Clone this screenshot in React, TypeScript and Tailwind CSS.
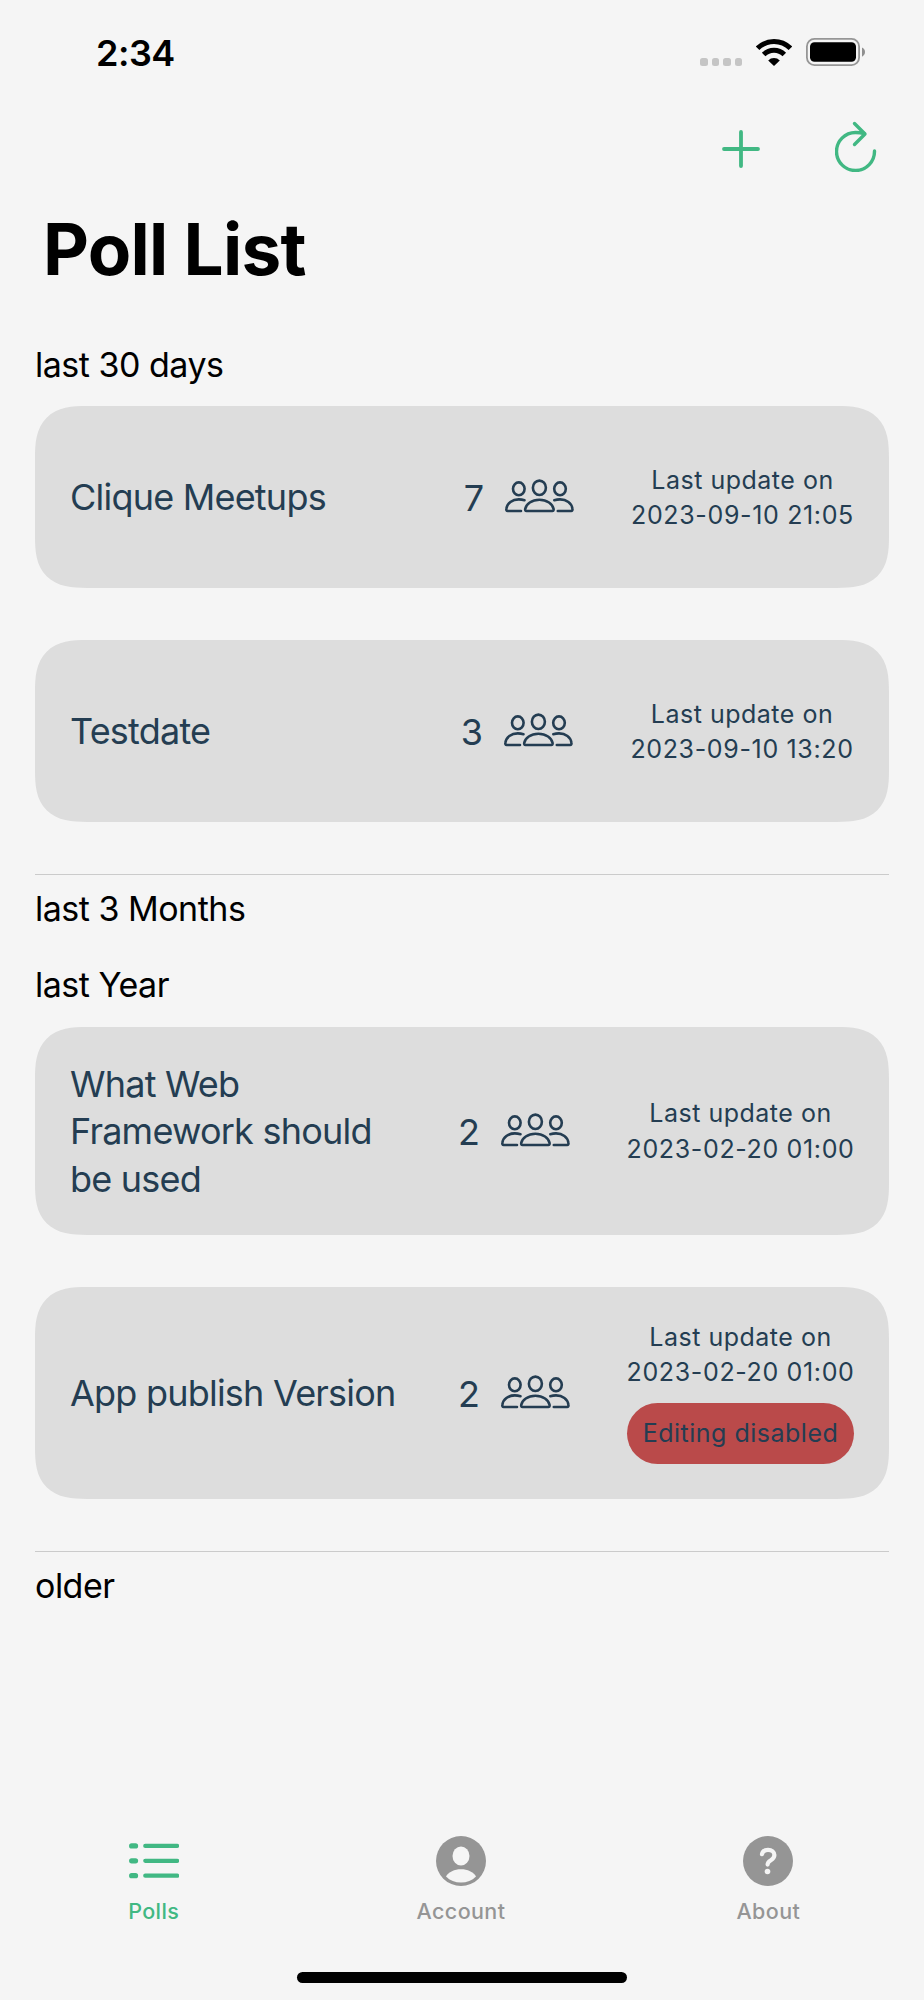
import type { ReactNode } from 'react'

type Poll = {
  title: string
  participants: number
  updated: string
  locked?: boolean
  size: string
  meta: string
}

const recent: Poll[] = [
  { title: 'Clique Meetups', participants: 7, updated: '2023-09-10 21:05', size: 'h-[182px]', meta: 'w-[223px] pt-0.5' },
  { title: 'Testdate', participants: 3, updated: '2023-09-10 13:20', size: 'h-[182px]', meta: 'w-[224px] pt-0.5' },
]

const lastYear: Poll[] = [
  { title: 'What Web Framework should be used', participants: 2, updated: '2023-02-20 01:00', size: 'h-[208px]', meta: 'w-[227px] pt-px' },
  { title: 'App publish Version', participants: 2, updated: '2023-02-20 01:00', locked: true, size: 'h-[212px]', meta: 'w-[227px] pb-0.5' },
]

function StatusBar() {
  return (
    <div className="flex h-[104px] items-center justify-between pl-24 pr-[59px]">
      <span className="pt-0.5 text-[36px] leading-[44px] font-semibold tracking-[-0.5px]">2:34</span>
      <div className="flex items-center">
        <div className="mt-5 mr-3.5 flex gap-1">
          {[...Array(4)].map((_, i) => (
            <span key={i} className="h-2 w-[7.5px] rounded-[2.5px] bg-[#c5c5c5]" />
          ))}
        </div>
        <svg width="36" height="27" viewBox="0 0 36 27" className="mr-3.5" fill="none" stroke="#000">
          <path d="M1.6 9.3a23.2 23.2 0 0 1 32.8 0" strokeWidth="5" />
          <path d="M7.7 15.6a14.6 14.6 0 0 1 20.6 0" strokeWidth="5" />
          <path d="M12.2 21.4a8.2 8.2 0 0 1 11.6 0L18 27z" fill="#000" stroke="none" />
        </svg>
        <svg width="59" height="28" viewBox="0 0 59 28">
          <rect x="0.9" y="0.9" width="52.2" height="26.2" rx="7.6" fill="none" stroke="#969696" strokeWidth="1.8" />
          <rect x="4" y="4.3" width="46" height="19.5" rx="4.5" />
          <path d="M56 9.5c1.8.8 3 2.5 3 4.6s-1.2 3.8-3 4.6z" fill="#8f8f8f" />
        </svg>
      </div>
    </div>
  )
}

function PeopleIcon() {
  return (
    <svg width="69" height="34" viewBox="0 0 69 34" className="-mt-0.5" fill="none" stroke="currentColor" strokeWidth="2.6" strokeLinecap="round" strokeLinejoin="round">
      <ellipse cx="34.4" cy="8.8" rx="6.5" ry="7.2" />
      <ellipse cx="13.8" cy="9.8" rx="5.8" ry="6.4" />
      <ellipse cx="55" cy="9.8" rx="5.8" ry="6.4" />
      <path d="M21.5 32c-1 0-1.5-.8-1.3-1.9 1-5.1 6.5-9.3 14.2-9.3s13.2 4.2 14.2 9.3c.2 1.1-.3 1.9-1.3 1.9z" />
      <path d="M19.5 21.2c-1.7-.5-3.6-.8-5.7-.8-6.7 0-11.6 3.900-12.400 9.100-.3 1.500.2 2.500 1.300 2.500h13.300" />
      <path d="M49.3 21.2c1.7-.5 3.600-.8 5.700-.8 6.700 0 11.600 3.900 12.400 9.100.3 1.500-.2 2.500-1.300 2.500H52.800" />
    </svg>
  )
}

function PollCard({ poll }: { poll: Poll }) {
  return (
    <div className={`flex items-center rounded-[52px] bg-[#ddd] px-[35px] text-[#243d52] [corner-shape:superellipse(1.45)] ${poll.size}`}>
      <div className="w-[335px] pt-0.5 text-[36px] leading-[47.5px] tracking-[-0.78px]">{poll.title}</div>
      <div className="ml-auto flex items-center gap-[21px]">
        <span className="pt-0.5 text-[36px] leading-[47px]">{poll.participants}</span>
        <PeopleIcon />
      </div>
      <div className={`ml-[57px] flex flex-col items-center text-[25px] leading-[35.3px] tracking-[0.5px] whitespace-nowrap ${poll.meta}`}>
        <span>Last update on</span>
        <span className="tracking-[0.65px]">{poll.updated}</span>
        {poll.locked && (
          <span className="mt-[13px] flex h-[61px] w-full items-center justify-center rounded-full bg-[#ba4a4a]">Editing disabled</span>
        )}
      </div>
    </div>
  )
}

function Heading({ children }: { children: ReactNode }) {
  return <h2 className="text-[34px] leading-10 tracking-[-0.5px]">{children}</h2>
}

function Tab({ label, active, children }: { label: string; active?: boolean; children: ReactNode }) {
  return (
    <button className={`flex flex-1 flex-col items-center ${active ? 'text-[#41b883]' : 'text-[#959595]'}`}>
      {children}
      <span className="mt-[11px] text-[21.5px] leading-7 font-medium tracking-[0.4px]">{label}</span>
    </button>
  )
}

export default function App() {
  return (
    <div className="flex h-[2000px] w-[924px] flex-col bg-[#f5f5f5] font-['Inter',sans-serif] text-black">
      <StatusBar />
      <div className="flex h-[91px] justify-end pt-[17px] pr-[47px] text-[#41b883]">
        <svg width="38" height="38" viewBox="0 0 38 38" className="mt-[9px] mr-[75px]" fill="none" stroke="currentColor" strokeWidth="3.8" strokeLinecap="round">
          <path d="M19 2v34M2 19h34" />
        </svg>
        <svg width="42" height="51" viewBox="0 0 42 51" fill="none" stroke="currentColor" strokeWidth="3.4" strokeLinecap="round" strokeLinejoin="round">
          <path d="M39.5 30A19 19 0 1 1 20.5 11.5c3 0 6 .3 8.5 1" />
          <path d="M19.5 2.5L30 13 19.5 23.5" />
        </svg>
      </div>
      <h1 className="ml-[43px] text-[71px] leading-[108px] font-bold tracking-[-0.75px]">Poll List</h1>

      <main className="flex flex-1 flex-col px-[35px] pt-[42px]">
        <Heading>last 30 days</Heading>
        <div className="mt-[21px] flex flex-col gap-[52px]">
          {recent.map((poll) => (
            <PollCard key={poll.title} poll={poll} />
          ))}
        </div>
        <hr className="mt-[52px] mb-3.5 border-[#cbcbcb]" />
        <Heading>last 3 Months</Heading>
        <div className="h-9" />
        <Heading>last Year</Heading>
        <div className="mt-[22px] flex flex-col gap-[52px]">
          {lastYear.map((poll) => (
            <PollCard key={poll.title} poll={poll} />
          ))}
        </div>
        <hr className="mt-[52px] mb-3.5 border-[#cbcbcb]" />
        <Heading>older</Heading>
      </main>

      <nav className="flex h-[136px] pr-0.5">
        <Tab label="Polls" active>
          <svg width="50" height="50" viewBox="0 0 50 50" fill="none" stroke="currentColor" strokeLinecap="round">
            <path d="M16.3 9.9h31.8M16.3 24.8h31.8M16.3 39.7h31.8" strokeWidth="4.3" />
            <path d="M2.7 9.9h3.8M2.7 24.8h3.8M2.7 39.7h3.8" strokeWidth="5.3" />
          </svg>
        </Tab>
        <Tab label="Account">
          <svg width="50" height="50" viewBox="0 0 50 50">
            <circle cx="25" cy="25" r="25" fill="currentColor" />
            <ellipse cx="25" cy="20" rx="8.5" ry="9.5" fill="#f5f5f5" />
            <path d="M10 40.4c2.5-4.4 8.5-7.1 15-7.1s12.5 2.7 15 7.1c-3.9 4-9.1 6.1-15 6.1s-11.1-2.1-15-6.1z" fill="#f5f5f5" />
          </svg>
        </Tab>
        <Tab label="About">
          <svg width="50" height="50" viewBox="0 0 50 50">
            <circle cx="25" cy="25" r="25" fill="currentColor" />
            <path d="M19 18.2c.5-2.7 2.8-4.4 6-4.4 3.8 0 6.4 2.1 6.4 5.3 0 2.4-1.2 3.8-3.5 5.2-2.5 1.5-3.3 2.3-3.3 4.300" fill="none" stroke="#f5f5f5" strokeWidth="4.2" strokeLinecap="round" />
            <circle cx="24.5" cy="35.5" r="2.8" fill="#f5f5f5" />
          </svg>
        </Tab>
      </nav>
      <div className="mx-auto mb-[17px] h-[11px] w-[330px] rounded-full bg-black" />
    </div>
  )
}
